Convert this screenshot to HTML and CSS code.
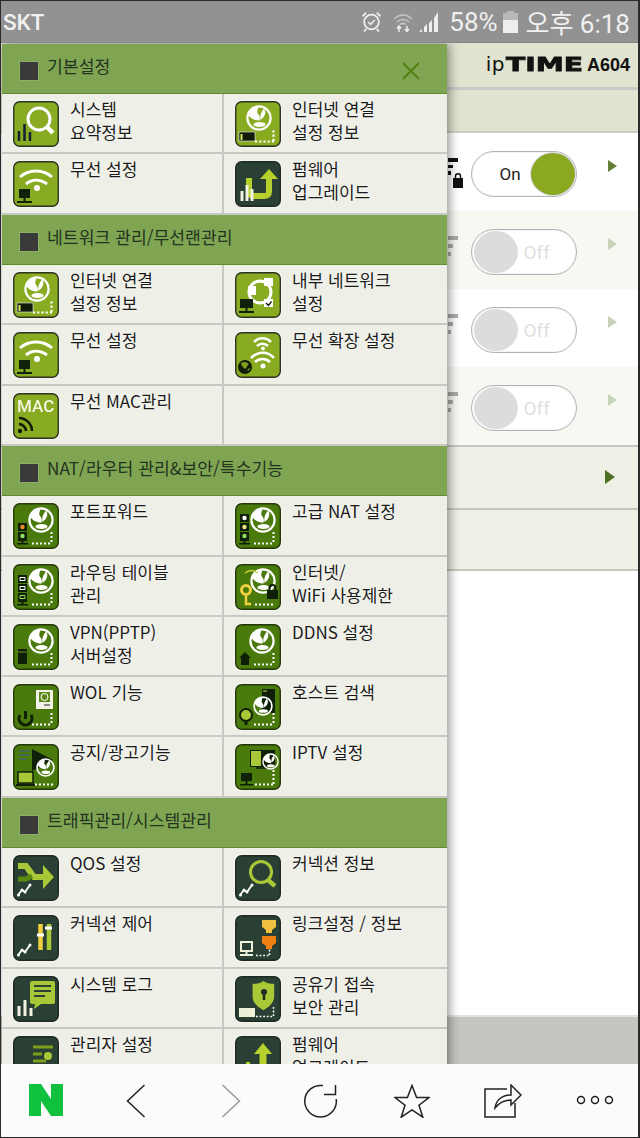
FILE: index.html
```html
<!DOCTYPE html>
<html lang="ko">
<head>
<meta charset="utf-8">
<title>ipTIME A604</title>
<link rel="stylesheet" href="styles.css">
</head>
<body>
<svg class="sprite" xmlns="http://www.w3.org/2000/svg">
<defs>
  <symbol id="globe" viewBox="0 0 26 26">
    <circle cx="13" cy="13" r="11.600" fill="none" stroke="#fff" stroke-width="2.200"/>
    <path d="M2.500 10C4 5.500 8 2 12.500 2 11.500 5 10.500 7 12 9c1.500 1.500 2.500 3.500 1.500 6.500C9 15.500 5 14 2.500 10z" fill="#fff"/>
    <path d="M18 3.500c2.500 3 1.500 8-3.500 11.500-1-4 .5-8 3.500-11.500z" fill="#fff"/>
    <ellipse cx="13.500" cy="19.500" rx="6" ry="2.400" fill="#fff"/>
  </symbol>
  <g id="dots"><path d="M20 40.500h19M38.500 40V29" fill="none" stroke="#fff" stroke-width="2.200" stroke-dasharray="2.200 2"/></g>
  <g id="dotsb"><path d="M19 40.500h20M38.500 39V29" fill="none" stroke="#fff" stroke-width="2" stroke-dasharray="2 2"/></g>
  <symbol id="i-sys" viewBox="0 0 46 46"><rect class="b-lime" x=".7" y=".7" width="44.6" height="44.6" rx="6"/><circle cx="26" cy="18" r="11" fill="none" stroke="#fff" stroke-width="3"/><path d="M34 26l6 6" stroke="#fff" stroke-width="4.500"/><path d="M6 40v-10M11.500 40V23M17 40v-9" stroke="#123" stroke-width="2.500"/></symbol>
  <symbol id="i-net" viewBox="0 0 46 46"><rect class="b-lime" x=".7" y=".7" width="44.6" height="44.6" rx="6"/><use href="#globe" x="11" y="4" width="26" height="26"/><rect x="4" y="31" width="16" height="9" fill="#111c08" stroke="#eef" stroke-width=".6"/><rect x="5.500" y="33" width="2" height="6" fill="#d8e860"/><use href="#dots"/></symbol>
  <symbol id="i-wifi" viewBox="0 0 46 46"><rect class="b-lime" x=".7" y=".7" width="44.6" height="44.6" rx="6"/><path d="M7 16c9-8 23-8 32 0M13 23c6-5 14-5 21 0" fill="none" stroke="#fff" stroke-width="3"/><circle cx="24" cy="27" r="3" fill="#fff"/><path d="M6 28h11v9H6zM10.500 37h2v3h-2zM4 40h15v2H4z" fill="#112008"/></symbol>
  <symbol id="i-fw" viewBox="0 0 46 46"><rect class="b-dark" x=".7" y=".7" width="44.6" height="44.6" rx="6"/><path d="M14 17v14c0 3 2 4 5 4h10c4 0 5-2 5-5v-12" fill="none" stroke="#b6d02c" stroke-width="6"/><path d="M25 18l9-10 9 10z" fill="#b6d02c"/><path d="M7 40v-10M12 40V24M17 40v-12" stroke="#f2f2e0" stroke-width="3"/></symbol>
  <symbol id="i-lan" viewBox="0 0 46 46"><rect class="b-lime" x=".7" y=".7" width="44.6" height="44.6" rx="6"/><circle cx="25" cy="20" r="11" fill="none" stroke="#fff" stroke-width="3"/><path d="M13 14h8v9h-8zM29 6h9v8h-9zM29 27h9v8h-9z" fill="#fff"/><path d="M31 31l2.500 2.500 3-4" fill="none" stroke="#111" stroke-width="1.300"/><path d="M5 27h13v9H5zM10.500 36h2v3h-2zM4 39h15v2H4z" fill="#112008"/></symbol>
  <symbol id="i-wext" viewBox="0 0 46 46"><rect class="b-lime" x=".7" y=".7" width="44.6" height="44.6" rx="6"/><path d="M19 10c5-5 12-5 17 0M22 14c3-3 8-3 11 0M16 26c7-7 17-7 23 0M20 30c4-4 11-4 15 0" fill="none" stroke="#fff" stroke-width="2.500"/><circle cx="28" cy="16.500" r="2" fill="#fff"/><circle cx="28" cy="34" r="2.500" fill="#fff"/><circle cx="10" cy="35" r="7" fill="#111c08"/><path d="M6 31c3-2 6-1 8 1-2 1-2 4-4 5-1-1-4-3-4-6zM12 39c1 0 3-1 3-3l-2 1z" fill="#7fa01e"/></symbol>
  <symbol id="i-mac" viewBox="0 0 46 46"><rect class="b-lime" x=".7" y=".7" width="44.6" height="44.6" rx="6"/><text x="4" y="19" class="mac">MAC</text><path d="M6 25c7 0 13 6 13 13M6 31c3 0 7 3 7 7" fill="none" stroke="#111c08" stroke-width="2.500"/><circle cx="7" cy="38" r="2.200" fill="#111c08"/></symbol>
  <symbol id="i-port" viewBox="0 0 46 46"><rect class="b-green" x=".7" y=".7" width="44.6" height="44.6" rx="6"/><use href="#globe" x="15" y="4" width="26" height="26"/><path d="M5 20h9v8H5zM5 29h9v9H5zM8.500 38h2v2h-2zM4 40h11v1.500H4z" fill="#0f2008"/><circle cx="9.500" cy="24" r="2.200" fill="#f08a30"/><circle cx="9.500" cy="33" r="2.200" fill="#8fe060"/><use href="#dotsb"/></symbol>
  <symbol id="i-nat" viewBox="0 0 46 46"><rect class="b-green" x=".7" y=".7" width="44.6" height="44.6" rx="6"/><use href="#globe" x="15" y="4" width="26" height="26"/><path d="M5 11h9v8H5zM5 20h9v8H5zM5 29h9v9H5zM8.500 38h2v2h-2zM4 40h11v1.500H4z" fill="#0f2008"/><circle cx="9.500" cy="15" r="2.200" fill="#fff"/><circle cx="9.500" cy="24" r="2.200" fill="#f0e880"/><circle cx="9.500" cy="33" r="2.200" fill="#8fe060"/><use href="#dotsb"/></symbol>
  <symbol id="i-route" viewBox="0 0 46 46"><rect class="b-green" x=".7" y=".7" width="44.6" height="44.6" rx="6"/><use href="#globe" x="15" y="4" width="26" height="26"/><path d="M5 11h9v8H5zM5 20h9v8H5zM5 29h9v9H5zM8.500 38h2v2h-2zM4 40h11v1.500H4z" fill="#0f2008"/><path d="M7 13.500h5v3H7zM7 22.500h5v3H7z" fill="none" stroke="#fff" stroke-width="1"/><path d="M7 31.500h5v3H7z" fill="none" stroke="#8fe060" stroke-width="1"/><use href="#dotsb"/></symbol>
  <symbol id="i-limit" viewBox="0 0 46 46"><rect class="b-green" x=".7" y=".7" width="44.6" height="44.6" rx="6"/><use href="#globe" x="15" y="4" width="26" height="26"/><path d="M10 9c4-3 9-3 13 0" fill="none" stroke="#c8d848" stroke-width="1.500"/><circle cx="11" cy="26" r="4.500" fill="none" stroke="#f0d040" stroke-width="3"/><path d="M11 30v10h5" fill="none" stroke="#f0d040" stroke-width="2.500"/><path d="M32 26h11v9H32z" fill="#0f2008"/><path d="M34.500 26v-2c0-4 6-4 6 0v2" fill="none" stroke="#0f2008" stroke-width="2"/><path d="M20 40.500h18" stroke="#fff" stroke-width="2" stroke-dasharray="2 2"/></symbol>
  <symbol id="i-vpn" viewBox="0 0 46 46"><rect class="b-green" x=".7" y=".7" width="44.6" height="44.6" rx="6"/><use href="#globe" x="15" y="4" width="26" height="26"/><path d="M5 25h9v15H5z" fill="#0f2008"/><path d="M5 28h9" stroke="#6a8f20"/><use href="#dotsb"/></symbol>
  <symbol id="i-ddns" viewBox="0 0 46 46"><rect class="b-green" x=".7" y=".7" width="44.600" height="44.600" rx="6"/><use href="#globe" x="14" y="4" width="26" height="26"/><path d="M4 34l6-6 6 6h-2v7H6v-7z" fill="#0f2008"/><use href="#dotsb"/></symbol>
  <symbol id="i-wol" viewBox="0 0 46 46"><rect class="b-green" x=".7" y=".7" width="44.6" height="44.6" rx="6"/><path d="M23 6h17v19H23z" fill="#f2f2e8"/><rect x="26" y="8" width="11" height="10" fill="#5c8a16"/><circle cx="31.500" cy="13" r="3.500" fill="none" stroke="#fff"/><path d="M31 21h6" stroke="#222"/><path d="M7 31a6.500 6.500 0 1 0 11 0" fill="none" stroke="#0f2008" stroke-width="3"/><path d="M12.500 27v8" stroke="#0f2008" stroke-width="3"/><use href="#dotsb"/></symbol>
  <symbol id="i-host" viewBox="0 0 46 46"><rect class="b-green" x=".7" y=".7" width="44.6" height="44.6" rx="6"/><path d="M27 5h13v24H27z" fill="#0f2008"/><path d="M28 7h4" stroke="#cde060"/><use href="#globe" x="18" y="12" width="20" height="20"/><circle cx="11" cy="31" r="6" fill="#a8c838" stroke="#0f2008" stroke-width="2"/><path d="M11 37v4" stroke="#0f2008" stroke-width="3"/><use href="#dotsb"/></symbol>
  <symbol id="i-notice" viewBox="0 0 46 46"><rect class="b-green" x=".7" y=".7" width="44.6" height="44.6" rx="6"/><path d="M6 7h11M6 11h11M6 15h8" stroke="#3a5a90" stroke-width="1.200"/><path d="M19 5l21 11-21 11z" fill="#0f2008"/><use href="#globe" x="23" y="14" width="19" height="19"/><path d="M5 28h15v11H5z" fill="#a8c838" stroke="#0f2008" stroke-width="1.500"/><path d="M3 40h19v2H3z" fill="#0f2008"/><path d="M22 40.500h18" stroke="#fff" stroke-width="2" stroke-dasharray="2 2"/></symbol>
  <symbol id="i-iptv" viewBox="0 0 46 46"><rect class="b-green" x=".7" y=".7" width="44.6" height="44.6" rx="6"/><path d="M15 6h25v17H15z" fill="#0f2008"/><path d="M16 7h10v15H16z" fill="#a8c838"/><path d="M21 24h12" stroke="#0f2008" stroke-width="1.500"/><use href="#globe" x="27" y="9" width="17" height="17"/><path d="M6 29h11v8H6zM10.500 37h2v3h-2zM5 40h13v1.500H5z" fill="#0f2008"/><path d="M20 40.500h18M38.500 40V26" fill="none" stroke="#fff" stroke-width="2" stroke-dasharray="2 2"/></symbol>
  <symbol id="i-qos" viewBox="0 0 46 46"><rect class="b-dark" x=".7" y=".7" width="44.6" height="44.6" rx="6"/><path d="M5 11h8l8 11h9" fill="none" stroke="#a8c838" stroke-width="6"/><path d="M5 24h8l6-3" fill="none" stroke="#5a8a10" stroke-width="5"/><path d="M30 10l11 12-11 12z" fill="#a8c838"/><path d="M5 40l4-5 3 2 5-7" fill="none" stroke="#fff" stroke-width="1.800"/><circle cx="5.500" cy="40" r="1.500" fill="#fff"/><circle cx="9" cy="35" r="1.500" fill="#fff"/><circle cx="12" cy="37" r="1.500" fill="#fff"/><circle cx="17" cy="30" r="1.500" fill="#fff"/></symbol>
  <symbol id="i-conn" viewBox="0 0 46 46"><rect class="b-dark" x=".7" y=".7" width="44.6" height="44.6" rx="6"/><circle cx="26" cy="17" r="10.500" fill="none" stroke="#a8c838" stroke-width="3"/><path d="M33 25l7 6" stroke="#a8c838" stroke-width="4.500"/><path d="M5 40l4-5 3 2 5-7" fill="none" stroke="#fff" stroke-width="1.800"/><circle cx="5.500" cy="40" r="1.500" fill="#fff"/><circle cx="9" cy="35" r="1.500" fill="#fff"/><circle cx="12" cy="37" r="1.500" fill="#fff"/><circle cx="17" cy="30" r="1.500" fill="#fff"/></symbol>
  <symbol id="i-ctrl" viewBox="0 0 46 46"><rect class="b-dark" x=".7" y=".7" width="44.600" height="44.600" rx="6"/><path d="M27.500 9v26" stroke="#f0d040" stroke-width="4.500"/><path d="M36 9v26" stroke="#a8c838" stroke-width="4.500"/><path d="M24 20h7M32 13h7" stroke="#fff" stroke-width="3"/><path d="M5 40l4-5 3 2 5-7" fill="none" stroke="#fff" stroke-width="1.800"/><circle cx="5.500" cy="40" r="1.500" fill="#fff"/><circle cx="9" cy="35" r="1.500" fill="#fff"/><circle cx="12" cy="37" r="1.500" fill="#fff"/><circle cx="17" cy="30" r="1.500" fill="#fff"/></symbol>
  <symbol id="i-link" viewBox="0 0 46 46"><rect class="b-dark" x=".7" y=".7" width="44.6" height="44.6" rx="6"/><path d="M27 5h14v7l-4 3v3h-6v-3l-4-3z" fill="#f0c040"/><path d="M27 21h14v7l-4 3v3h-6v-3l-4-3z" fill="#f08010"/><path d="M6 27h11v9H6z" fill="none" stroke="#eef0d8" stroke-width="2"/><path d="M10.500 36h2v3h-2zM5 39h13v2H5z" fill="#eef0d8"/><path d="M21 40.500h14M34.500 40v-6" fill="none" stroke="#fff" stroke-width="1.600" stroke-dasharray="1.800 1.800"/></symbol>
  <symbol id="i-log" viewBox="0 0 46 46"><rect class="b-dark" x=".7" y=".7" width="44.6" height="44.6" rx="6"/><path d="M19 5h21c1 0 2 1 2 2v19c0 1-1 2-2 2H28l-7 5 1-5h-3c-1 0-2-1-2-2V7c0-1 1-2 2-2z" fill="#a8c838"/><path d="M21 10h17M21 15h17M21 20h11" stroke="#2a4035" stroke-width="2"/><path d="M6 40V30M12 40V24M18 40V32" stroke="#f2f2e0" stroke-width="3"/></symbol>
  <symbol id="i-sec" viewBox="0 0 46 46"><rect class="b-dark" x=".7" y=".7" width="44.6" height="44.6" rx="6"/><path d="M20 7c5 0 9-1 11-3 3 2 6 3 11 3v13c0 7-6 11-11 14-5-3-11-7-11-14z" transform="translate(-2 1) scale(.98)" fill="#a8c838"/><circle cx="29" cy="16" r="3" fill="#1e2e24"/><path d="M29 17v7" stroke="#1e2e24" stroke-width="2.500"/><rect x="4" y="32" width="16" height="9" fill="#eef0d8"/><path d="M21 40.500h17M38.500 40V30" fill="none" stroke="#fff" stroke-width="1.600" stroke-dasharray="1.800 1.800"/></symbol>
  <symbol id="i-admin" viewBox="0 0 46 46"><rect class="b-dark" x=".7" y=".7" width="44.6" height="44.600" rx="6"/><path d="M20 11h20M20 18h9M20 25h13" stroke="#7ea01c" stroke-width="3"/><circle cx="35" cy="20" r="4" fill="#a8c838"/><path d="M6 40v-6M12 40V28M18 40v-8" stroke="#f2f2e0" stroke-width="3"/></symbol>
  <symbol id="i-fw2" viewBox="0 0 46 46"><rect class="b-dark" x=".7" y=".7" width="44.6" height="44.6" rx="6"/><path d="M28 16v24" stroke="#b6d02c" stroke-width="7"/><path d="M19 18l9-11 9 11z" fill="#b6d02c"/><path d="M13 40V26" stroke="#b6d02c" stroke-width="4"/></symbol>
</defs>
</svg>

<div class="phone">
  <header class="status">
    <span class="carrier">SKT</span>
    <div class="status-right">
      <svg class="st-alarm" viewBox="0 0 20 20"><circle cx="10" cy="10.500" r="7" fill="none" stroke="#eee" stroke-width="1.700"/><path d="M6.800 10.500l2.300 2.300 4-4.300" fill="none" stroke="#eee" stroke-width="1.500"/><path d="M1.500 5l3.500-3.500M18.500 5L15 1.500M5 17l-2 2.500M15 17l2 2.500" stroke="#eee" stroke-width="1.700"/></svg>
      <svg class="st-wifi" viewBox="0 0 20 20"><path d="M1 7c5-5.500 13-5.500 18 0M4 10c3.500-3.500 8.500-3.500 12 0M7 12.500c2-1.500 4-1.500 6 0" fill="none" stroke="#c4c4c4" stroke-width="1.500"/><path d="M6 20v-5M4 16.500L6 14l2 2.500M14 14v5M12 17l2 2.500 2-2.500" fill="none" stroke="#eee" stroke-width="1.500"/></svg>
      <svg class="st-signal" viewBox="0 0 22 22"><path d="M0 21h3v-3zM5 21h3v-8l-3 3zM10 21h3V9l-3 3zM15 21h4V1l-4 6z" fill="#eee"/></svg>
      <span class="pct">58%</span>
      <svg class="st-batt" viewBox="0 0 15 22"><path d="M4 0h7v2h4v20H0V2h4z" fill="#b8b8b8"/><path d="M0 9h15v13H0z" fill="#eee"/></svg>
      <span class="clock">오후 6:18</span>
    </div>
  </header>

  <div class="main">
    <div class="page">
      <div class="brand-bar">
        <div class="logo"><span class="lg-ip">ip</span><span class="lg-time">TIME</span><span class="lg-model">A604</span></div>
      </div>
      <div class="sub-bar"></div>

      <div class="wl-row">
        <svg class="net" viewBox="0 0 24 30"><path d="M8 0h10v4H8zM8 7h5v3H8zM8 13h3v4H8zM13 20h10v10H13z" fill="#111"/><path d="M15.500 20v-2c0-3 5-3 5 0v2" fill="none" stroke="#111" stroke-width="1.500"/></svg>
        <div class="toggle is-on"><span class="tg-label">On</span><span class="knob"></span></div>
        <span class="tri tri-on"></span>
      </div>
      <div class="wl-row alt">
        <svg class="net" viewBox="0 0 24 30"><path d="M8 0h10v4H8zM8 8h5v4H8zM8 16h3v4H8z" fill="#aaa"/></svg>
        <div class="toggle"><span class="knob"></span><span class="tg-label">Off</span></div>
        <span class="tri"></span>
      </div>
      <div class="wl-row">
        <svg class="net" viewBox="0 0 24 30"><path d="M8 0h10v4H8zM8 8h5v4H8zM8 16h3v4H8z" fill="#aaa"/></svg>
        <div class="toggle"><span class="knob"></span><span class="tg-label">Off</span></div>
        <span class="tri"></span>
      </div>
      <div class="wl-row alt">
        <svg class="net" viewBox="0 0 24 30"><path d="M8 0h10v4H8zM8 8h5v4H8zM8 16h3v4H8z" fill="#aaa"/></svg>
        <div class="toggle"><span class="knob"></span><span class="tg-label">Off</span></div>
        <span class="tri"></span>
      </div>

      <div class="plain-row first"><span class="tri tri-dark"></span></div>
      <div class="plain-row"></div>
      <div class="blank"></div>
      <div class="foot-band"></div>
    </div>

    <nav class="menu">
      <section class="sec">
        <h2 class="sec-head"><span class="sq"></span><span class="sec-title">기본설정</span>
          <svg class="close" viewBox="0 0 18 18"><path d="M1 1l16 16M17 1L1 17" stroke="#4f8010" stroke-width="1.800" fill="none"/></svg></h2>
        <div class="grid">
          <a class="cell"><svg class="ico"><use href="#i-sys"/></svg><span class="lbl">시스템<br>요약정보</span></a>
          <a class="cell"><svg class="ico"><use href="#i-net"/></svg><span class="lbl">인터넷 연결<br>설정 정보</span></a>
          <a class="cell"><svg class="ico"><use href="#i-wifi"/></svg><span class="lbl">무선 설정</span></a>
          <a class="cell"><svg class="ico"><use href="#i-fw"/></svg><span class="lbl">펌웨어<br>업그레이드</span></a>
        </div>
      </section>
      <section class="sec">
        <h2 class="sec-head"><span class="sq"></span><span class="sec-title">네트워크 관리/무선랜관리</span></h2>
        <div class="grid">
          <a class="cell"><svg class="ico"><use href="#i-net"/></svg><span class="lbl">인터넷 연결<br>설정 정보</span></a>
          <a class="cell"><svg class="ico"><use href="#i-lan"/></svg><span class="lbl">내부 네트워크<br>설정</span></a>
          <a class="cell"><svg class="ico"><use href="#i-wifi"/></svg><span class="lbl">무선 설정</span></a>
          <a class="cell"><svg class="ico"><use href="#i-wext"/></svg><span class="lbl">무선 확장 설정</span></a>
          <a class="cell"><svg class="ico"><use href="#i-mac"/></svg><span class="lbl">무선 MAC관리</span></a>
          <a class="cell"></a>
        </div>
      </section>
      <section class="sec">
        <h2 class="sec-head"><span class="sq"></span><span class="sec-title">NAT/라우터 관리&amp;보안/특수기능</span></h2>
        <div class="grid">
          <a class="cell"><svg class="ico"><use href="#i-port"/></svg><span class="lbl">포트포워드</span></a>
          <a class="cell"><svg class="ico"><use href="#i-nat"/></svg><span class="lbl">고급 NAT 설정</span></a>
          <a class="cell"><svg class="ico"><use href="#i-route"/></svg><span class="lbl">라우팅 테이블<br>관리</span></a>
          <a class="cell"><svg class="ico"><use href="#i-limit"/></svg><span class="lbl">인터넷/<br>WiFi 사용제한</span></a>
          <a class="cell"><svg class="ico"><use href="#i-vpn"/></svg><span class="lbl">VPN(PPTP)<br>서버설정</span></a>
          <a class="cell"><svg class="ico"><use href="#i-ddns"/></svg><span class="lbl">DDNS 설정</span></a>
          <a class="cell"><svg class="ico"><use href="#i-wol"/></svg><span class="lbl">WOL 기능</span></a>
          <a class="cell"><svg class="ico"><use href="#i-host"/></svg><span class="lbl">호스트 검색</span></a>
          <a class="cell"><svg class="ico"><use href="#i-notice"/></svg><span class="lbl">공지/광고기능</span></a>
          <a class="cell"><svg class="ico"><use href="#i-iptv"/></svg><span class="lbl">IPTV 설정</span></a>
        </div>
      </section>
      <section class="sec">
        <h2 class="sec-head"><span class="sq"></span><span class="sec-title">트래픽관리/시스템관리</span></h2>
        <div class="grid">
          <a class="cell"><svg class="ico"><use href="#i-qos"/></svg><span class="lbl">QOS 설정</span></a>
          <a class="cell"><svg class="ico"><use href="#i-conn"/></svg><span class="lbl">커넥션 정보</span></a>
          <a class="cell"><svg class="ico"><use href="#i-ctrl"/></svg><span class="lbl">커넥션 제어</span></a>
          <a class="cell"><svg class="ico"><use href="#i-link"/></svg><span class="lbl">링크설정 / 정보</span></a>
          <a class="cell"><svg class="ico"><use href="#i-log"/></svg><span class="lbl">시스템 로그</span></a>
          <a class="cell"><svg class="ico"><use href="#i-sec"/></svg><span class="lbl">공유기 접속<br>보안 관리</span></a>
          <a class="cell"><svg class="ico"><use href="#i-admin"/></svg><span class="lbl">관리자 설정</span></a>
          <a class="cell"><svg class="ico"><use href="#i-fw2"/></svg><span class="lbl">펌웨어<br>업그레이드</span></a>
        </div>
      </section>
    </nav>
  </div>

  <footer class="toolbar">
    <svg class="tb tb-n" viewBox="0 0 34 32"><path d="M0 0h12l10 15V0h12v32H22L12 17v15H0z" fill="#0fc13f"/></svg>
    <svg class="tb tb-back" viewBox="0 0 20 34"><path d="M18.500 1L1.500 17l17 16" fill="none" stroke="#222" stroke-width="1.500"/></svg>
    <svg class="tb tb-fwd" viewBox="0 0 20 34"><path d="M1.500 1l17 16-17 16" fill="none" stroke="#999" stroke-width="1.500"/></svg>
    <svg class="tb tb-reload" viewBox="0 0 34 34"><path d="M19 1.600A15.800 15.800 0 1 0 32.200 15" fill="none" stroke="#222" stroke-width="1.500"/><path d="M20 10.500h11.500V1" fill="none" stroke="#222" stroke-width="1.500"/></svg>
    <svg class="tb tb-star" viewBox="0 0 36 34"><path d="M18 1.500l4.600 12h12.400l-10 7.700 3.800 12L18 26l-10.800 7.200 3.800-12-10-7.700h12.400z" fill="none" stroke="#222" stroke-width="1.500"/></svg>
    <svg class="tb tb-share" viewBox="0 0 38 34"><path d="M31 19v14H1V5h22" fill="none" stroke="#222" stroke-width="1.500"/><path d="M11 24c1-8 7-13 16-13V1l10 10-10 10v-5c-7 0-12 3-16 8z" fill="#fbfbfb" stroke="#222" stroke-width="1.500"/></svg>
    <svg class="tb tb-more" viewBox="0 0 38 10"><circle cx="5" cy="5" r="3.500" fill="none" stroke="#222" stroke-width="1.500"/><circle cx="19" cy="5" r="3.500" fill="none" stroke="#222" stroke-width="1.500"/><circle cx="33" cy="5" r="3.500" fill="none" stroke="#222" stroke-width="1.500"/></svg>
  </footer>
</div>
</body>
</html>
```
FILE: styles.css
```css
* { box-sizing: border-box; }
html, body { margin: 0; padding: 0; }
body { font-family: "Noto Sans CJK KR", "Noto Sans", sans-serif; color: #1a1a1a; background: #fff; }
.sprite { position: absolute; width: 0; height: 0; overflow: hidden; }
.b-lime { fill: #88ab22; stroke: #2c3320; stroke-width: 1.400; }
.b-green { fill: #4a7a0c; stroke: #24380a; stroke-width: 1.400; }
.b-dark { fill: #2a4035; stroke: #1c2a22; stroke-width: 1.400; }
.mac { font: 500 17px "Roboto", sans-serif; fill: #f2f6e0; }

.phone { width: 640px; height: 1138px; display: flex; flex-direction: column; border: 1px solid #2a2a2a; border-right-width: 2px; overflow: hidden; }

.status { height: 42px; flex: none; background: #929292; display: flex; align-items: center; justify-content: space-between; padding: 0 8px 0 2px; color: #f0f0f0; border-bottom: 1px solid #868686; }
.carrier { font: 500 22.500px "Roboto", sans-serif; }
.status-right { display: flex; align-items: center; }
.st-alarm { width: 21px; height: 21px; margin-right: 11px; }
.st-wifi { width: 20px; height: 20px; margin-right: 6px; }
.st-signal { width: 22px; height: 22px; margin-right: 8px; }
.pct { font: 400 26px "Roboto", sans-serif; margin-right: 5px; }
.st-batt { width: 15px; height: 22px; margin-right: 8px; }
.clock { font: 400 26px "Roboto", "Noto Sans CJK KR", sans-serif; }

.main { position: relative; flex: 1; min-height: 0; overflow: hidden; background: #fff; }
.page { display: flex; flex-direction: column; height: 100%; }
.brand-bar { height: 47px; flex: none; background: #dfe3cf; border-bottom: 3px solid #cacbc8; display: flex; align-items: center; justify-content: flex-end; padding: 0 8px 2px 0; }
.logo { display: flex; align-items: baseline; color: #111; white-space: nowrap; }
.lg-ip { font: 400 20px "DejaVu Sans", sans-serif; letter-spacing: .5px; }
.lg-time { display: inline-block; font: 700 20px "DejaVu Sans", sans-serif; transform: scaleX(1.41); transform-origin: left center; width: 80px; margin-left: 1px; -webkit-text-stroke: .8px #111; }
.lg-model { font: 700 18px "Liberation Sans", sans-serif; margin-left: 1px; }
.sub-bar { height: 43px; flex: none; background: #dfe3cf; border-bottom: 2px solid #cdcfc6; }

.wl-row { height: 78px; flex: none; background: #fff; display: flex; align-items: center; padding: 4px 0 0 439px; }
.wl-row.alt { background: #f7f8f2; }
.net { width: 24px; height: 30px; margin-right: 7px; flex: none; position: relative; top: -1px; }
.toggle { width: 106px; height: 46px; flex: none; border: 1.500px solid #b4b4b4; border-radius: 23px; background: #fff; display: flex; align-items: center; padding: 0 1.500px; box-shadow: inset 0 0 0 1px #f4f4f4; }
.knob { width: 44px; height: 42px; border-radius: 50%; background: #dcdcdc; flex: none; }
.toggle.is-on .knob { background: #8aa820; margin-left: auto; box-shadow: 0 0 0 1px #dcd8e8; }
.tg-label { font-size: 17px; color: #222; font-family: "Roboto", sans-serif; }
.toggle.is-on .tg-label { margin-left: 26px; }
.toggle:not(.is-on) .tg-label { margin-left: 6px; color: #dfdfdf; font-size: 19px; }
.tri { width: 0; height: 0; margin-left: 31px; position: relative; top: -8px; border-left: 9px solid #c7d3b6; border-top: 6px solid transparent; border-bottom: 6px solid transparent; flex: none; }
.tri-on { border-left-color: #66803c; }
.plain-row { height: 61px; flex: none; background: #eeefe5; border-bottom: 2px solid #c6c7c0; display: flex; align-items: center; padding-left: 604px; }
.plain-row.first { border-top: 2px solid #c6c7c0; height: 65px; }
.tri-dark { margin: 0; top: -1px; border-left: 10px solid #4f6f26; border-top-width: 7px; border-bottom-width: 7px; }
.blank { flex: 1; background: #fff; border-bottom: 2px solid #e2e3dc; }
.foot-band { height: 47px; flex: none; background: #c5c6bf; }

.menu { position: absolute; left: 1px; top: 1px; width: 445px; box-shadow: 2px 0 10px rgba(0,0,0,.45); background: #f4f4ee; }
.sec { margin-bottom: .5px; }
.sec-head { height: 50px; margin: 0; background: #80a552; border-bottom: 1px solid #5f8a2e; display: flex; align-items: flex-start; padding: 10px 0 0 18px; position: relative; font-weight: 400; }
.sq { width: 18px; height: 18px; background: #3a3a3a; box-shadow: 0 0 0 1px #8fae66; margin: 8px 9px 0 0; flex: none; }
.sec-title { font-size: 17.200px; line-height: 23px; color: #22331f; }
.close { position: absolute; left: 400px; top: 18px; width: 18px; height: 18px; }
.grid { display: grid; grid-template-columns: 222px 223px; grid-auto-rows: 60.250px; }
.cell { display: flex; align-items: flex-start; gap: 11px; padding: 7px 0 0 11px; background: #eeefe6; border-bottom: 2px solid #c8c8c4; overflow: hidden; }
.cell:nth-child(odd) { border-right: 2px solid #c8c8c4; }
.ico { width: 46px; height: 46px; flex: none; filter: drop-shadow(0 0 1px #fff); }
.lbl { font-size: 17px; line-height: 23px; margin-top: -4px; color: #1a1a1a; text-shadow: 0 0 2px #fff; white-space: nowrap; }

.toolbar { height: 73px; flex: none; background: #fbfbfb; display: flex; align-items: flex-start; position: relative; z-index: 1; padding-top: 20px; }
.tb { flex: none; display: block; }
.tb-n { width: 34px; height: 32px; margin-left: 28px; }
.tb-back { width: 20px; height: 34px; margin-left: 63px; }
.tb-fwd { width: 20px; height: 34px; margin-left: 75px; }
.tb-reload { width: 34px; height: 34px; margin-left: 63px; }
.tb-star { width: 36px; height: 34px; margin-left: 56px; }
.tb-share { width: 38px; height: 34px; margin-left: 54px; }
.tb-more { width: 38px; height: 10px; margin: 11px 0 0 54px; }
```
